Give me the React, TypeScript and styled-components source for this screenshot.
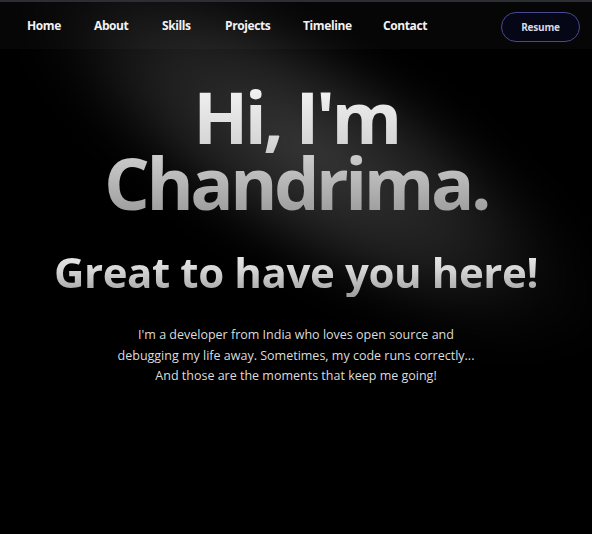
import styled, { createGlobalStyle } from "styled-components";

const GlobalStyle = createGlobalStyle`
  html, body {
    margin: 0;
    padding: 0;
    background: #000;
  }
  body {
    font-family: "Open Sans", "Noto Sans", sans-serif;
    color: #fff;
    border-top: 2px solid #2b2f34;
  }
`;

const Page = styled.div`
  position: relative;
  min-height: 532px;
  overflow: hidden;
  background: #000;

  /* soft diagonal spotlight behind the hero */
  &::before {
    content: "";
    position: absolute;
    left: -30px;
    top: 25px;
    width: 680px;
    height: 250px;
    transform: rotate(31deg);
    background: radial-gradient(
      ellipse at center,
      rgba(54, 54, 54, 1) 0%,
      rgba(38, 38, 38, 0.8) 35%,
      rgba(14, 14, 14, 0.4) 58%,
      rgba(0, 0, 0, 0) 72%
    );
    filter: blur(14px);
    pointer-events: none;
  }
`;

const Nav = styled.nav`
  position: relative;
  display: flex;
  align-items: center;
  justify-content: space-between;
  height: 47px;
  padding: 0 12px 0 27px;
  background: rgba(255, 255, 255, 0.025);
`;

const NavList = styled.ul`
  display: flex;
  align-items: center;
  list-style: none;
  margin: 0;
  padding: 0;
`;

const NavItem = styled.li<{ $w: number }>`
  width: ${(p) => p.$w}px;
  font-size: 12px;
  font-weight: 700;
  color: #f2f2f2;
  letter-spacing: -0.4px;
`;

const ResumeButton = styled.button`
  width: 79px;
  height: 30px;
  margin-top: 2px;
  border-radius: 15px;
  border: 1px solid #4a4994;
  background: #050716;
  color: #d8d8e0;
  font-family: inherit;
  font-size: 10px;
  font-weight: 700;
  letter-spacing: -0.2px;
`;

const Hero = styled.section`
  position: relative;
  display: flex;
  flex-direction: column;
  align-items: center;
  text-align: center;
  padding-top: 34px;
`;

const GradientText = styled.h1`
  margin: 0;
  font-weight: 700;
  background: linear-gradient(180deg, #f4f4f4 0%, #d6d6d6 45%, #9c9c9c 100%);
  -webkit-background-clip: text;
  background-clip: text;
  color: transparent;
`;

const Title = styled(GradientText)`
  font-size: 72px;
  line-height: 66px;
  letter-spacing: -3.5px;
`;

const Subtitle = styled(GradientText).attrs({ as: "h2" })`
  margin-top: 32px;
  font-size: 42px;
  line-height: 50px;
  letter-spacing: -0.4px;
`;

const Intro = styled.p`
  margin: 28px 0 0;
  max-width: 360px;
  font-size: 12.5px;
  line-height: 20.5px;
  color: #dcdcdc;
`;

const links = [
  { text: "Home", w: 67 },
  { text: "About", w: 68 },
  { text: "Skills", w: 63 },
  { text: "Projects", w: 78 },
  { text: "Timeline", w: 80 },
  { text: "Contact", w: 70 },
];

export default function App() {
  return (
    <>
      <GlobalStyle />
      <Page>
        <Nav>
          <NavList>
            {links.map((l) => (
              <NavItem key={l.text} $w={l.w}>
                {l.text}
              </NavItem>
            ))}
          </NavList>
          <ResumeButton>Resume</ResumeButton>
        </Nav>
        <Hero>
          <Title>
            Hi, I'm
            <br />
            Chandrima.
          </Title>
          <Subtitle>Great to have you here!</Subtitle>
          <Intro>
            I'm a developer from India who loves open source and debugging my
            life away. Sometimes, my code runs correctly... And those are the
            moments that keep me going!
          </Intro>
        </Hero>
      </Page>
    </>
  );
}
